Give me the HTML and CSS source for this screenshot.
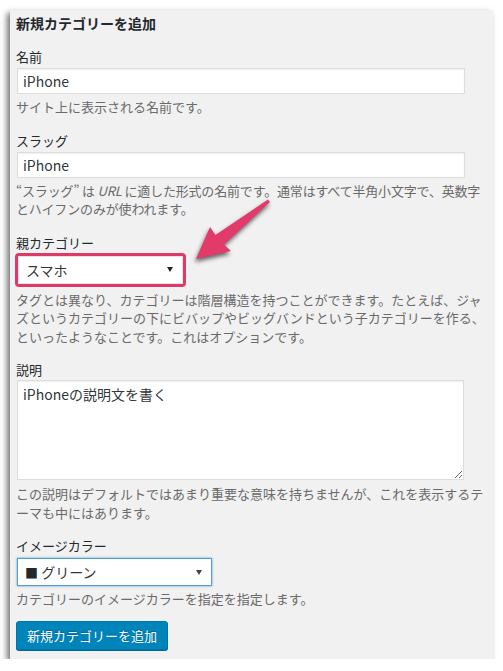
FILE: index.html
```html
<!DOCTYPE html>
<html lang="ja">
<head>
<meta charset="utf-8">
<title>新規カテゴリーを追加</title>
<link rel="stylesheet" href="styles.css">
</head>
<body>
<div class="panel">
  <h3 class="title">新規カテゴリーを追加</h3>

  <div class="field">
    <label class="label">名前</label>
    <input class="text-input" type="text" value="iPhone">
    <p class="desc">サイト上に表示される名前です。</p>
  </div>

  <div class="field">
    <label class="label">スラッグ</label>
    <input class="text-input" type="text" value="iPhone">
    <p class="desc desc-tight">“スラッグ” は <i>URL</i> に適した形式の名前です。通常はすべて半角小文字で、英数字とハイフンのみが使われます。</p>
  </div>

  <div class="field">
    <label class="label">親カテゴリー</label>
    <div class="highlight">
      <div class="select">
        <span class="select-text">スマホ</span>
        <span class="caret"></span>
      </div>
    </div>
    <p class="desc">タグとは異なり、カテゴリーは階層構造を持つことができます。たとえば、ジャズというカテゴリーの下にビバップやビッグバンドという子カテゴリーを作る、といったようなことです。これはオプションです。</p>
  </div>

  <div class="field">
    <label class="label">説明</label>
    <textarea class="textarea">iPhoneの説明文を書く</textarea>
    <p class="desc">この説明はデフォルトではあまり重要な意味を持ちませんが、これを表示するテーマも中にはあります。</p>
  </div>

  <div class="field">
    <label class="label">イメージカラー</label>
    <div class="select select-focus">
      <span class="select-text"><span class="swatch">■</span> グリーン</span>
      <span class="caret caret-small"></span>
    </div>
    <p class="desc">カテゴリーのイメージカラーを指定を指定します。</p>
  </div>

  <button class="button" type="button">新規カテゴリーを追加</button>

  <svg class="arrow" viewBox="10 10 483 300" width="483" height="300" aria-hidden="true">
    <polygon points="196,259 231,251 224,244.5 270,202 268,199.5 215.5,235 210,227" fill="#e23a6b"/>
  </svg>
</div>
</body>
</html>
```

FILE: styles.css
```css
html, body {
  margin: 0;
  padding: 0;
  background: #ffffff;
}

.panel {
  position: relative;
  margin: 10px 0 0 10px;
  width: 483px;
  box-sizing: border-box;
  padding: 3px 6px 9px 6px;
  background: #f1f1f1;
  box-shadow: -3px 3px 6px rgba(0, 0, 0, 0.55);
  font-family: "Noto Sans CJK JP", "Noto Sans", sans-serif;
  font-size: 13px;
  color: #23282d;
}

.title {
  margin: 0;
  font-size: 14px;
  line-height: 20px;
  font-weight: 700;
  color: #23282d;
}

.field {
  margin-top: 14px;
}

.label {
  display: block;
  line-height: 20px;
  color: #23282d;
}

.text-input {
  display: block;
  box-sizing: border-box;
  margin: 1px 0 0 1px;
  width: 448px;
  height: 26px;
  padding: 0 5px;
  border: 1px solid #dddddd;
  background: #ffffff;
  box-shadow: inset 0 1px 2px rgba(0, 0, 0, 0.07);
  font-family: "Noto Sans CJK JP", "Noto Sans", sans-serif;
  font-size: 14px;
  color: #32373c;
  outline: none;
}

.desc {
  margin: 4px 0 0 0;
  line-height: 18.5px;
  color: #6a6a6a;
}

.desc-tight {
  letter-spacing: -0.18px;
}

.desc i {
  font-style: italic;
}

.highlight {
  width: 165px;
  margin-left: -1px;
  border: 3px solid #dd3a6a;
  border-radius: 4px;
}

.select {
  box-sizing: border-box;
  display: flex;
  align-items: center;
  justify-content: space-between;
  height: 28px;
  padding: 0 9px 0 7px;
  background: #ffffff;
  border: 1px solid #e3e3e3;
  font-size: 14px;
  color: #32373c;
}

.select-focus {
  width: 195px;
  margin: 2px 0 0 1px;
  border-color: #5b9dd9;
  box-shadow: 0 0 2px rgba(30, 140, 190, 0.8);
}

.swatch {
  color: #23282d;
  font-size: 13px;
}

.caret {
  width: 0;
  height: 0;
  border-left: 3px solid transparent;
  border-right: 3px solid transparent;
  border-top: 5px solid #222222;
}

.caret-small {
  border-top-color: #444444;
}

.textarea {
  display: block;
  box-sizing: border-box;
  margin: 0 0 5px 1px;
  width: 447px;
  height: 100px;
  padding: 3px 5px;
  border: 1px solid #dddddd;
  background: #ffffff;
  box-shadow: inset 0 1px 2px rgba(0, 0, 0, 0.07);
  font-family: "Noto Sans CJK JP", "Noto Sans", sans-serif;
  font-size: 14px;
  line-height: 20px;
  color: #32373c;
  outline: none;
}

.button {
  display: block;
  margin-top: 12px;
  height: 29px;
  padding: 0 10px;
  border: 1px solid #0073aa;
  border-radius: 3px;
  background: #0085ba;
  box-shadow: 0 1px 0 #006799;
  color: #ffffff;
  font-family: "Noto Sans CJK JP", "Noto Sans", sans-serif;
  font-size: 13px;
  line-height: 27px;
  text-shadow: 0 -1px 1px #006799;
}

.arrow {
  position: absolute;
  left: 0;
  top: 0;
  pointer-events: none;
  filter: drop-shadow(-1px 3px 2px rgba(0, 0, 0, 0.6));
}
```
